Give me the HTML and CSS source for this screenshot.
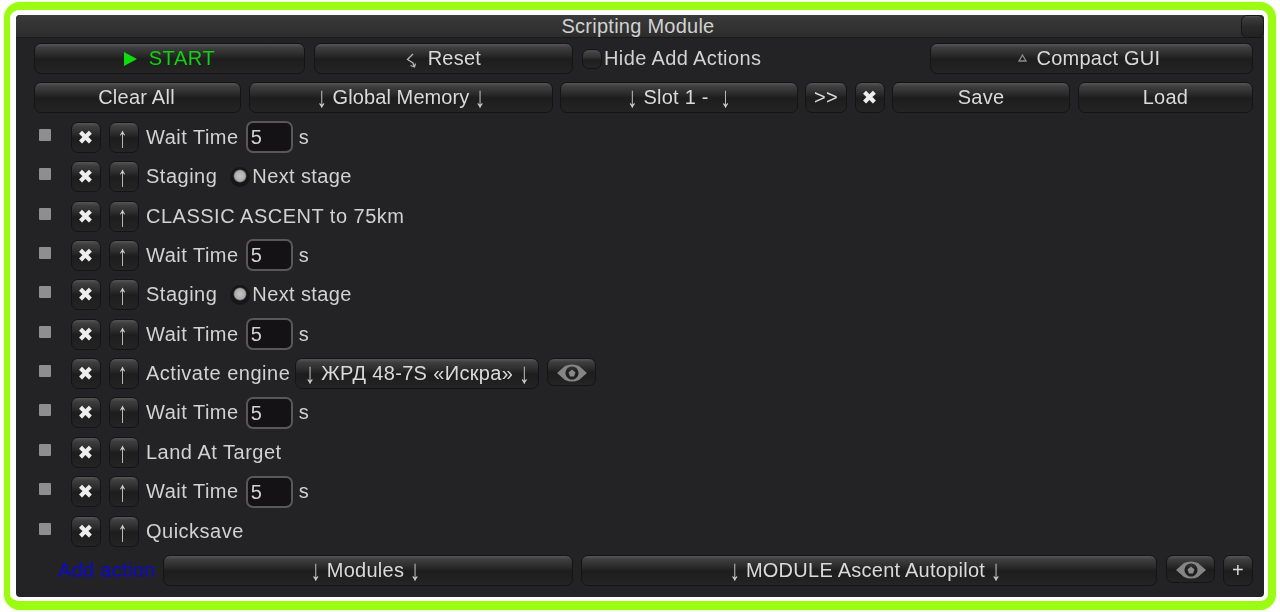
FILE: index.html
```html
<!DOCTYPE html>
<html lang="en">
<head>
    <meta charset="UTF-8">
    <title>Scripting Module</title>
    <link rel="stylesheet" href="styles.css">
</head>
<body>
    <div class="frame">
        <div class="panel">
            <div class="title-bar">
                <span>Scripting Module</span>
                <div class="corner-btn"></div>
            </div>
            <div class="content">
                <div class="row">
                    <div class="btn w-start start"><span class="play"></span>START</div>
                    <div class="btn w-reset">
                        <svg class="reset-icon" viewBox="0 0 10 15"><path d="M7 1 L1.5 6.5 L7 10 L8 13.5 M4.5 12.5 L8.5 14 L9.5 10.5" fill="none" stroke="#b5b5b5" stroke-width="1.3"/></svg>
                        Reset
                    </div>
                    <label class="toggle-label"><span class="toggle"></span>Hide Add Actions</label>
                    <div class="btn w-compact push">
                        <svg class="tri" viewBox="0 0 9 8"><path d="M4.5 1 L8 7 L1 7 Z" fill="none" stroke="#8c8c8c" stroke-width="1.3"/></svg>
                        Compact GUI
                    </div>
                </div>
                <div class="row">
                    <div class="btn w-clear">Clear All</div>
                    <div class="btn w-global"><span class="arr">&#8595;</span> Global Memory <span class="arr">&#8595;</span></div>
                    <div class="btn w-slot"><span class="arr">&#8595;</span> Slot 1 -&nbsp; <span class="arr">&#8595;</span></div>
                    <div class="btn w-next">&gt;&gt;</div>
                    <div class="btn small"><span class="cross">&#10006;</span></div>
                    <div class="btn w-save">Save</div>
                    <div class="btn w-load">Load</div>
                </div>

                <div class="row action">
                    <span class="check"></span>
                    <div class="btn small"><span class="cross">&#10006;</span></div>
                    <div class="btn small"><span class="arr">&#8593;</span></div>
                    <span class="label">Wait Time</span>
                    <div class="input">5</div>
                    <span class="label">s</span>
                </div>
                <div class="row action">
                    <span class="check"></span>
                    <div class="btn small"><span class="cross">&#10006;</span></div>
                    <div class="btn small"><span class="arr">&#8593;</span></div>
                    <span class="label">Staging</span>
                    <label class="radio-label"><span class="radio"></span>Next stage</label>
                </div>
                <div class="row action">
                    <span class="check"></span>
                    <div class="btn small"><span class="cross">&#10006;</span></div>
                    <div class="btn small"><span class="arr">&#8593;</span></div>
                    <span class="label">CLASSIC ASCENT to 75km</span>
                </div>
                <div class="row action">
                    <span class="check"></span>
                    <div class="btn small"><span class="cross">&#10006;</span></div>
                    <div class="btn small"><span class="arr">&#8593;</span></div>
                    <span class="label">Wait Time</span>
                    <div class="input">5</div>
                    <span class="label">s</span>
                </div>
                <div class="row action">
                    <span class="check"></span>
                    <div class="btn small"><span class="cross">&#10006;</span></div>
                    <div class="btn small"><span class="arr">&#8593;</span></div>
                    <span class="label">Staging</span>
                    <label class="radio-label"><span class="radio"></span>Next stage</label>
                </div>
                <div class="row action">
                    <span class="check"></span>
                    <div class="btn small"><span class="cross">&#10006;</span></div>
                    <div class="btn small"><span class="arr">&#8593;</span></div>
                    <span class="label">Wait Time</span>
                    <div class="input">5</div>
                    <span class="label">s</span>
                </div>
                <div class="row action">
                    <span class="check"></span>
                    <div class="btn small"><span class="cross">&#10006;</span></div>
                    <div class="btn small"><span class="arr">&#8593;</span></div>
                    <span class="label">Activate engine</span>
                    <div class="btn w-engine"><span class="arr">&#8595;</span> ЖРД 48-7S «Искра» <span class="arr">&#8595;</span></div>
                    <div class="btn w-eye">
                        <svg class="eye" viewBox="0 0 32 20"><path fill-rule="evenodd" d="M1 10 L9 3 Q16 0 23 3 L31 10 L23 17 Q16 20 9 17 Z M16 3.5 a6.5 6.5 0 1 0 0.01 0 Z" fill="#858585"/><path d="M16 6.5 L19.5 9.5 L18 13.5 L14 13.5 L12.5 9.5 Z" fill="#8a8a8a"/></svg>
                    </div>
                </div>
                <div class="row action">
                    <span class="check"></span>
                    <div class="btn small"><span class="cross">&#10006;</span></div>
                    <div class="btn small"><span class="arr">&#8593;</span></div>
                    <span class="label">Wait Time</span>
                    <div class="input">5</div>
                    <span class="label">s</span>
                </div>
                <div class="row action">
                    <span class="check"></span>
                    <div class="btn small"><span class="cross">&#10006;</span></div>
                    <div class="btn small"><span class="arr">&#8593;</span></div>
                    <span class="label">Land At Target</span>
                </div>
                <div class="row action">
                    <span class="check"></span>
                    <div class="btn small"><span class="cross">&#10006;</span></div>
                    <div class="btn small"><span class="arr">&#8593;</span></div>
                    <span class="label">Wait Time</span>
                    <div class="input">5</div>
                    <span class="label">s</span>
                </div>
                <div class="row action">
                    <span class="check"></span>
                    <div class="btn small"><span class="cross">&#10006;</span></div>
                    <div class="btn small"><span class="arr">&#8593;</span></div>
                    <span class="label">Quicksave</span>
                </div>

                <div class="row">
                    <span class="add-action">Add action</span>
                    <div class="btn w-modules"><span class="arr">&#8595;</span> Modules <span class="arr">&#8595;</span></div>
                    <div class="btn w-module"><span class="arr">&#8595;</span> MODULE Ascent Autopilot <span class="arr">&#8595;</span></div>
                    <div class="btn w-eye2">
                        <svg class="eye" viewBox="0 0 32 20"><path fill-rule="evenodd" d="M1 10 L9 3 Q16 0 23 3 L31 10 L23 17 Q16 20 9 17 Z M16 3.5 a6.5 6.5 0 1 0 0.01 0 Z" fill="#858585"/><path d="M16 6.5 L19.5 9.5 L18 13.5 L14 13.5 L12.5 9.5 Z" fill="#8a8a8a"/></svg>
                    </div>
                    <div class="btn small">+</div>
                </div>
            </div>
        </div>
    </div>
</body>
</html>
```

FILE: styles.css
```css
html, body {
    height: 100%;
}

body {
    margin: 0;
    background: #fff;
    font-family: "Liberation Sans", Arial, sans-serif;
    font-size: 20px;
    color: #d2d2d2;
    overflow: hidden;
}

.frame {
    box-sizing: border-box;
    height: 608px;
    margin: 2px 4px 0;
    padding: 5px 4px 4px 6px;
    border-style: solid;
    border-width: 8px 8px 9px 6px;
    border-color: #9bfb12;
    border-radius: 16px;
    background: #fff;
    box-shadow: 0 0 2px #c4fb70;
}

.panel {
    height: 100%;
    border-radius: 4px;
    background: #232224;
    overflow: hidden;
    filter: blur(0.5px);
}

.title-bar {
    position: relative;
    height: 23px;
    line-height: 23px;
    padding-right: 4px;
    text-align: center;
    letter-spacing: 0.25px;
    background: linear-gradient(to bottom, #3a3a3a, #2c2c2c);
    border-bottom: 1px solid #1a1a1a;
    box-sizing: border-box;
}

.corner-btn {
    position: absolute;
    top: 0;
    right: 0;
    width: 23px;
    height: 23px;
    box-sizing: border-box;
    border: 1px solid #161616;
    border-radius: 6px;
    background: linear-gradient(to bottom, #555 0, #3c3c3c 10%, #2a2a2a 50%, #222 100%);
}

.content {
    display: flex;
    flex-direction: column;
    gap: 7.38px;
    padding: 4.6px 11px 0 18px;
}

.row {
    display: flex;
    align-items: center;
    height: 32px;
    gap: 8px;
}

.btn {
    flex: none;
    box-sizing: border-box;
    height: 31px;
    line-height: 29px;
    text-align: center;
    border: 1px solid #141414;
    border-radius: 7px;
    background: linear-gradient(to bottom, #565656 0, #3e3e3e 12%, #2c2c2c 36%, #1d1d1d 52%, #242424 100%);
    white-space: nowrap;
    letter-spacing: 0.25px;
    color: #dadada;
}

.push {
    margin-left: auto;
}

.w-start { width: 271px; letter-spacing: 0.6px; }
.w-reset { width: 259px; margin-left: 1px; }
.w-compact { width: 323px; padding-right: 5px; }
.w-clear { width: 207px; padding-right: 2px; }
.w-global { width: 304px; letter-spacing: 0.1px; }
.w-slot { width: 238px; margin-left: -1px; }
.w-next { width: 42px; margin-left: -1px; }
.w-save { width: 178px; margin-left: -1px; }
.w-load { width: 175px; }
.w-engine { width: 244px; margin-left: -3px; letter-spacing: 0.35px; }
.w-eye { width: 49px; height: 28px; margin-top: -3px; }
.w-modules { width: 410px; padding-right: 5px; }
.w-module { width: 576px; padding-right: 7px; }
.w-eye2 { width: 49px; height: 28px; margin-top: -3px; margin-left: 1px; }

.start {
    color: #12d012;
}

.play {
    display: inline-block;
    width: 0;
    height: 0;
    margin-right: 12px;
    vertical-align: -1px;
    border-style: solid;
    border-width: 7px 0 7px 13px;
    border-color: transparent transparent transparent #0fdc0f;
}

.reset-icon {
    width: 10px;
    height: 15px;
    margin-right: 6px;
    vertical-align: -3px;
}

.tri {
    width: 9px;
    height: 8px;
    margin-right: 4px;
    vertical-align: 3px;
}

.arr {
    display: inline-block;
    color: #cfcfcf;
    transform: scaleY(1.45);
}

.small .arr {
    margin-left: -3px;
}

.toggle-label, .radio-label {
    display: flex;
    align-items: center;
    letter-spacing: 0.38px;
}

.toggle-label {
    margin-left: 1px;
}

.toggle {
    width: 20px;
    height: 20px;
    box-sizing: border-box;
    margin-right: 2px;
    border: 1px solid #141414;
    border-radius: 7px;
    background: linear-gradient(to bottom, #4c4c4c 0, #333 40%, #1e1e1e 55%, #262626 100%);
}

.small {
    width: 30px;
}

.small + .label {
    margin-left: -1px;
}

.cross {
    font-family: "DejaVu Sans", sans-serif;
    font-size: 19px;
    color: #eee;
    letter-spacing: 0;
    margin-left: -1px;
}

.check {
    flex: none;
    width: 12px;
    height: 12px;
    margin: -5px 12px 0 5px;
    background: #8e8e8e;
    border-radius: 1px;
}

.action .label {
    letter-spacing: 0.5px;
}

.input {
    box-sizing: border-box;
    flex: none;
    width: 47px;
    height: 32px;
    line-height: 29px;
    margin-left: -1px;
    margin-right: -2px;
    padding-left: 3px;
    border: 2px solid #585858;
    border-radius: 7px;
    background: #141214;
}

.radio-label {
    margin-left: 5px;
}

.radio {
    flex: none;
    width: 20px;
    height: 20px;
    margin-right: 2px;
    border-radius: 50%;
    background: radial-gradient(circle at 50% 45%, #c4c4c4 0, #aaa 36%, #161616 46%, #161616 100%);
}

.add-action {
    flex: none;
    width: 97px;
    margin-left: 24px;
    color: #0a0ad0;
    letter-spacing: 0.3px;
    white-space: nowrap;
}

.eye {
    width: 32px;
    height: 20px;
    vertical-align: -3px;
}
```
